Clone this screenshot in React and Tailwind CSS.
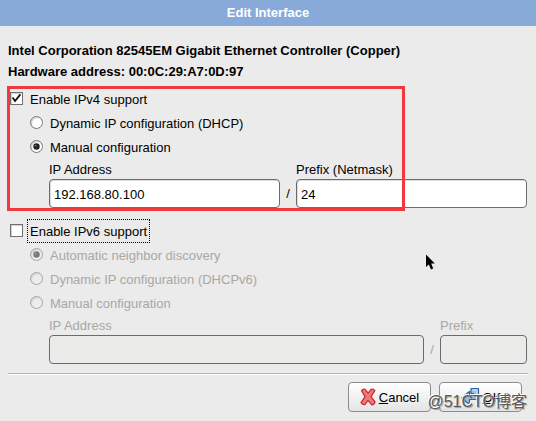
import React, { useState } from 'react';

function Check({ id, label, checked, onChange, focused }) {
  return (
    <div className="flex h-6 items-center pl-[2px]">
      <span className="relative -mt-px block">
        <input
          id={id}
          type="checkbox"
          checked={checked}
          onChange={(e) => onChange(e.target.checked)}
          className="block size-[13px] appearance-none border border-[#6f6f6f] bg-white shadow-[inset_1px_1px_1px_#d0d0d0]"
        />
        {checked && (
          <svg
            viewBox="0 0 13 13"
            className="pointer-events-none absolute inset-0 size-[13px]"
            fill="none"
            stroke="#111"
            strokeWidth="1.8"
          >
            <path d="M2.6 5.6 L5 9 L10.4 2.4" />
          </svg>
        )}
      </span>
      <label
        htmlFor={id}
        className={
          focused
            ? 'ml-1 border border-dotted border-black px-[2px] pt-px leading-[21px]'
            : 'ml-1 border border-transparent px-[2px] pt-[2px] leading-5'
        }
      >
        {label}
      </label>
    </div>
  );
}

function Radio({ id, name, label, checked, onChange, disabled }) {
  return (
    <div className="flex h-6 items-center gap-[7px] pl-[22px]">
      <span className="relative -mt-px block">
        <input
          id={id}
          name={name}
          type="radio"
          checked={checked}
          onChange={onChange}
          disabled={disabled}
          className="block size-[13px] appearance-none rounded-full border border-[#777] bg-white shadow-[inset_1px_1px_1px_#d0d0d0] disabled:border-[#a5a5a5] disabled:bg-[#ededed]"
        />
        {checked && (
          <svg
            viewBox="0 0 13 13"
            className="pointer-events-none absolute inset-0 size-[13px]"
          >
            <circle cx="6.5" cy="6.5" r="3.2" fill={disabled ? '#777' : '#222'} />
            <circle cx="5.6" cy="5.6" r="0.9" fill={disabled ? '#aaa' : '#777'} />
          </svg>
        )}
      </span>
      <label htmlFor={id} className={disabled ? 'pt-[2px] text-[#a9a8a4]' : 'pt-[2px]'}>
        {label}
      </label>
    </div>
  );
}

const FIELD =
  'h-[29px] w-full min-w-0 rounded-[4px] border border-[#6c6c6c] bg-white px-1 pt-[2px] shadow-[inset_1px_1px_0_#dcdcdc] outline-none disabled:bg-[#ebebe9] disabled:shadow-none';

const FIELD_LABEL = 'h-5 leading-[22px]';

const BUTTON =
  'flex h-[30px] w-[83px] items-center justify-center gap-[3px] rounded-[4px] border border-[#8c8c8c] bg-linear-to-b from-white to-[#e4e4e4]';

export default function App() {
  const [ipv4, setIpv4] = useState(true);
  const [ipv6, setIpv6] = useState(false);
  const [mode4, setMode4] = useState('manual');
  const [mode6, setMode6] = useState('auto');
  const [address, setAddress] = useState('192.168.80.100');
  const [prefix, setPrefix] = useState('24');

  return (
    <div className="relative min-h-screen bg-[#ebebeb] font-['Liberation_Sans','Noto_Sans_CJK_SC',sans-serif] text-[13px] leading-5 text-black">
      <header className="flex h-[26px] items-center justify-center bg-[#88aad9] font-bold text-white">
        Edit Interface
      </header>

      <main className="px-2 pt-[14px]">
        <div className="font-bold leading-[21px]">
          <p>Intel Corporation 82545EM Gigabit Ethernet Controller (Copper)</p>
          <p>Hardware address: 00:0C:29:A7:0D:97</p>
        </div>

        {/* IPv4 */}
        <section className="relative mt-1 pt-px pb-[3px]">
          <Check id="v4" label="Enable IPv4 support" checked={ipv4} onChange={setIpv4} />
          <Radio
            id="v4-dhcp"
            name="mode4"
            label="Dynamic IP configuration (DHCP)"
            checked={mode4 === 'dhcp'}
            onChange={() => setMode4('dhcp')}
            disabled={!ipv4}
          />
          <Radio
            id="v4-manual"
            name="mode4"
            label="Manual configuration"
            checked={mode4 === 'manual'}
            onChange={() => setMode4('manual')}
            disabled={!ipv4}
          />
          <div className="grid grid-cols-[1fr_16px_1fr] pr-px pl-[41px]">
            <label htmlFor="v4-ip" className={FIELD_LABEL}>IP Address</label>
            <span />
            <label htmlFor="v4-prefix" className={FIELD_LABEL}>Prefix (Netmask)</label>
            <input
              id="v4-ip"
              type="text"
              className={FIELD}
              value={address}
              onChange={(e) => setAddress(e.target.value)}
            />
            <span className="self-center text-center">/</span>
            <input
              id="v4-prefix"
              type="text"
              className={FIELD}
              value={prefix}
              onChange={(e) => setPrefix(e.target.value)}
            />
          </div>
          {/* highlight frame */}
          <div className="pointer-events-none absolute inset-y-0 -left-px w-[398px] border-3 border-[#ee3a3e]" />
        </section>

        {/* IPv6 */}
        <section className="mt-2 pb-[9px]">
          <Check id="v6" label="Enable IPv6 support" checked={ipv6} onChange={setIpv6} focused />
          <Radio
            id="v6-auto"
            name="mode6"
            label="Automatic neighbor discovery"
            checked={mode6 === 'auto'}
            onChange={() => setMode6('auto')}
            disabled={!ipv6}
          />
          <Radio
            id="v6-dhcp"
            name="mode6"
            label="Dynamic IP configuration (DHCPv6)"
            checked={mode6 === 'dhcp'}
            onChange={() => setMode6('dhcp')}
            disabled={!ipv6}
          />
          <Radio
            id="v6-manual"
            name="mode6"
            label="Manual configuration"
            checked={mode6 === 'manual'}
            onChange={() => setMode6('manual')}
            disabled={!ipv6}
          />
          <div className="grid grid-cols-[1fr_16px_87px] pr-px pl-[41px] text-[#a9a8a4]">
            <label htmlFor="v6-ip" className={FIELD_LABEL}>IP Address</label>
            <span />
            <label htmlFor="v6-prefix" className={FIELD_LABEL}>Prefix</label>
            <input id="v6-ip" type="text" disabled={!ipv6} className={FIELD} />
            <span className="self-center text-center">/</span>
            <input id="v6-prefix" type="text" disabled={!ipv6} className={FIELD} />
          </div>
        </section>
      </main>

      <footer className="mx-2 flex justify-end gap-2 border-t border-[#b4b4b4] pt-2 pr-[6px] shadow-[inset_0_1px_0_#fff]">
        <button type="button" className={BUTTON}>
          <svg viewBox="0 0 16 18" className="h-[18px] w-4">
            <path
              d="M1.6 2.6 Q3 0.6 5 1.4 L8.2 5.2 L11 1.4 Q13.4 0.4 14.8 2.6 L11 8.6 L15 14 Q14.4 16.6 11.8 16.8 L8 12.4 L4.8 16.6 Q2 17 1 14.6 L5 8.8 Z"
              fill="#f0787a"
              stroke="#cc2c34"
              strokeWidth="1.3"
              strokeLinejoin="round"
            />
          </svg>
          <span className="pt-[2px]">
            <u>C</u>ancel
          </span>
        </button>
        <button type="button" className={BUTTON}>
          <svg viewBox="0 0 20 20" className="size-5" strokeLinejoin="round">
            <path
              d="M11 1.5 H18.5 V12.5 H9.5 V17.5 L1.5 10.8 L9.5 4.5 V8.5 H13.5 V6.5 H11 Z"
              fill="#9dbfe8"
              stroke="#2f5f9f"
              strokeWidth="1.2"
            />
            <path d="M12.5 3 H17 V7" fill="none" stroke="#d5e4f6" strokeWidth="1" />
          </svg>
          <span className="pt-[2px]">
            <u>O</u>K
          </span>
        </button>
      </footer>

      {/* pointer */}
      <svg
        viewBox="0 0 10 16"
        className="pointer-events-none absolute top-[254px] left-[425px] h-4 w-[10px]"
      >
        <path d="M1 0.5 V13 L3.8 10.6 L6 15.4 L8.2 14.4 L6.2 9.6 H9.8 Z" fill="#000" />
      </svg>

      {/* watermark */}
      <span className="pointer-events-none absolute right-[9px] bottom-[7px] text-base leading-6 whitespace-nowrap text-[#5a5a5a] [text-shadow:-1px_-1px_0_#fff,1px_1px_1px_#999]">
        @51CTO博客
      </span>
    </div>
  );
}
